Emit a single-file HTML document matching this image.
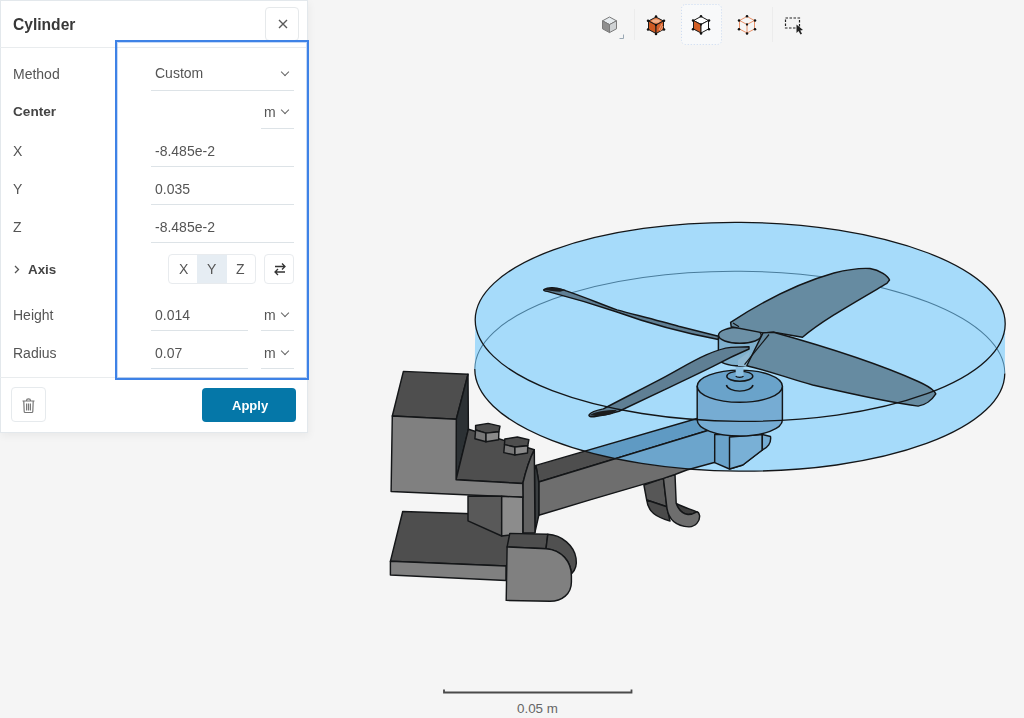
<!DOCTYPE html>
<html><head><meta charset="utf-8">
<style>
*{box-sizing:border-box;margin:0;padding:0}
html,body{width:1024px;height:718px;overflow:hidden;background:#f5f5f5;-webkit-font-smoothing:antialiased;font-family:"Liberation Sans",sans-serif}
#scene{position:absolute;left:0;top:0}
#panel{position:absolute;left:0;top:0;width:308px;height:433px;background:#fff;box-shadow:inset 0 0 0 1px #e3e8ec,1px 3px 8px rgba(0,0,0,0.05);will-change:transform}
.t{position:absolute;white-space:nowrap;color:#555;font-size:14px;line-height:16px}
.ul{position:absolute;height:1px;background:#dde3e7}
.chev{position:absolute;width:6px;height:6px;border-right:1.2px solid #666;border-bottom:1.2px solid #666;transform:rotate(45deg)}
</style></head><body>
<!--SC--><svg id="scene" width="1024" height="718" viewBox="0 0 1024 718"><defs>
<clipPath id="disk"><path transform="rotate(0.48 740 346)" d="M475,321.8 A265,99.5 0 0 1 1005,321.8 L1005,371.2 A265,100 0 0 1 475,371.2 Z"/></clipPath>
</defs>
<g stroke="#141618" stroke-width="1.45" stroke-linejoin="round">
<!-- hook -->
<path fill="#575757" d="M643.9,485 L663.4,478.4 L666.8,506.8 L646.7,500 Z"/>
<path fill="#4a4a4a" d="M646.7,500 C648,512 656,517 670,521 L666.8,506.8 Z"/>
<path fill="#3f3f3f" d="M676.2,503.5 C683,507 690,509 696.9,511.8 C693,514 690,514.6 688,514.5 C683,514 679,511 676.2,503.5 Z"/>
<path fill="#6e6e6e" d="M663.4,478 L666.8,506.8 C668,518 675,526 689,526.9 C696,526.5 700,521 699.6,515.7 C699,513 698,512 696.9,511.8 C693,514 690,514.6 688,514.5 C683,514 679,511 676.2,503.5 L675,474.5 Z"/>
<!-- arm -->
<path fill="#4e4e4e" d="M535.9,465.4 L716,413 L716,428 L538.8,482 Z"/>
<path fill="#6e6e6e" d="M538.8,482 L716,428 L716,462 L686.8,470 L675,474.5 L663.4,478.4 L590,499.9 L538.8,515.3 Z"/>
<path fill="#3a3e40" d="M535.9,465.4 L538.8,482 L538.8,515.3 L535,532 L534.5,470 Z"/>
<!-- upper block -->
<path fill="#4e4e4e" d="M403.4,371.4 L468,374.2 L456.3,419.2 L392.3,416 Z"/>
<path fill="#2c3134" d="M468,374.2 L468.4,429.2 L456.1,479.7 L456.3,419.2 Z"/>
<!-- middle top -->
<path fill="#4e4e4e" d="M468.4,429.2 L534.3,449.8 C530,458 526,470 522.8,483.5 L456.1,479.7 Z"/>
<path fill="#626262" d="M534.3,449.8 L535,533 L523,533 L522.8,483.5 C526,470 530,458 534.3,449.8 Z"/>
<!-- front L -->
<path fill="#808080" d="M392.3,416 L456.3,419.2 L456.1,479.7 L522.8,483.5 L523,497.3 L391.1,491.5 Z"/>
<!-- bolts -->
<path fill="#4e4e4e" d="M475.6,425.5 L488.1,423.4 L500,426.1 L498.9,431.7 L486,433.1 L475.6,430 Z"/>
<path fill="#777" d="M475.6,430 L486,433.1 L486,441.8 L474.9,438.7 Z"/>
<path fill="#8a8a8a" d="M486,433.1 L498.9,431.7 L498.6,439.7 L486,441.8 Z"/>
<path fill="#4e4e4e" d="M504.8,439 L517.4,437 L528.9,439.7 L527.8,445.7 L514.9,447 L504.5,444.6 Z"/>
<path fill="#777" d="M504.5,444.6 L514.9,447 L514.9,455 L503.8,452.6 Z"/>
<path fill="#8a8a8a" d="M514.9,447 L527.8,445.7 L527.5,453 L514.9,455 Z"/>
<!-- plate -->
<path fill="#4e4e4e" d="M402.7,511.5 L480,514 L525,540 L506,566 L390.4,561.3 Z"/>
<path fill="#808080" d="M390.4,561.3 L506,566 L506,580.5 L390.4,575 Z"/>
<!-- column -->
<path fill="#595959" d="M468,496 L501.7,496.3 L501.7,536 L468,520.8 Z"/>
<path fill="#8c8c8c" d="M501.7,496.3 L522.8,497.3 L522.8,533.4 L501.7,536 Z"/>
<!-- clamp -->
<path fill="#4e4e4e" d="M509.8,533.4 L547.8,534.3 L546,548.8 L507.1,547 Z"/>
<path fill="#505050" d="M547.8,534.3 C562,535 574,546 576,558 C577,564 575.5,570 571.4,574 C570,560 562,551 546,548.8 Z"/>
<path fill="#808080" d="M507.1,547 L546,548.8 C562,550 571.4,562 571.4,576 L571.4,582 C571.4,594 562,601.3 550,601.3 L506.2,600.4 Z"/>
</g>
<!-- disk fill -->
<path fill="#a6dbfa" transform="rotate(0.48 740 346)" d="M475,321.8 A265,99.5 0 0 1 1005,321.8 L1005,371.2 A265,100 0 0 1 475,371.2 Z"/>
<g clip-path="url(#disk)" stroke="#141618" stroke-width="1.45" stroke-linejoin="round">
<path fill="#5f9ac3" d="M535.9,465.4 L716,413 L716,428 L538.8,482 Z"/>
<path fill="#6ca5cc" d="M538.8,482 L716,428 L716,462 L686.8,470 L675,474.5 L663.4,478.4 L590,499.9 L538.8,515.3 Z"/>
</g>
<!-- bottom ellipse back edge -->
<path fill="none" stroke="#4a7d9c" stroke-width="1" transform="rotate(0.48 740 346)" d="M475,371.2 A265,100 0 0 1 1005,371.2"/>
<g stroke="#141618" stroke-width="1.45" stroke-linejoin="round">
<!-- motor mount -->
<path fill="#6aa3ca" d="M714.7,434.5 L762.3,434.5 L762.3,450 L742.8,465 L729.5,469 L714.7,462.7 Z"/>
<path fill="#79b0d6" d="M729.5,437 L762.3,434.5 L762.3,450 L742.8,465 L729.5,469 Z"/>
<path fill="#75acd3" d="M762.3,434.5 L770.5,436.5 C771.5,443 767.5,448 762.3,450 Z"/>
<!-- motor -->
<path fill="#76acd3" d="M697.2,386.2 L782.4,386.2 L782.4,420 A42.6,16 0 0 1 697.2,420 Z"/>
<ellipse cx="739.8" cy="386.2" rx="42.6" ry="16.1" fill="#6aa3ca"/>
<!-- shaft/ring -->
<ellipse cx="739.8" cy="376.2" rx="13" ry="5" fill="none"/>
<path fill="none" d="M726.4,385 A13.4,7 0 0 0 753,385"/>
<path fill="#8cc0e2" stroke="none" d="M735.7,365 L743.5,365 L743.5,376.5 L735.7,376.5 Z"/>
<path fill="none" stroke-width="1.2" d="M735.7,376 A4,1.8 0 0 0 743.5,376"/>
<!-- hub -->
<path fill="#7fb0cd" d="M718.4,335.3 L761.3,335.3 L761.3,358 A21.4,8 0 0 1 718.4,358 Z"/>
<path fill="#8fb8d2" stroke="none" d="M738,360 L750,351 L747,366 L738,366 Z"/>
<ellipse cx="739.9" cy="335.3" rx="21.4" ry="8" fill="#6c90a6"/>
<!-- blade C thin -->
<path fill="#5f7f94" d="M544.2,289.4 C548,287 556,287.5 561.7,289.4 C585,297 600,304 617,309.9 C640,316 660,321 678.6,326.3 L718.4,336.2 L718.4,339.5 C690,334 650,324 617,312 C590,303 565,296 547.3,291.4 C544,291 543,290 544.2,289.4 Z"/>
<path fill="#1a1c1e" stroke="none" d="M544.5,290 C546,287 556,286.8 566,290 L560,291.8 C555,291.2 549,291 544.5,290 Z"/>
<!-- blade A -->
<path fill="#668ba1" d="M730.6,322.3 C771,296 802,282 834,273 C850,269 862,268 870,268.5 C880,270 888,276 889.5,280 L886.9,283.4 C850,305 820,322 802.5,337.3 L773.5,332.3 L763,332.9 L731.2,326.7 Z"/>
<path fill="none" stroke-width="1.2" d="M733,323 L739,326.7"/>
<!-- blade B -->
<path fill="#668ba1" d="M763,332.9 L773.5,332.3 C830,348 883,365.7 918.2,381.5 C926,385 932,389 934,391.2 L935.8,393.8 C932,400 925,405 918.2,406.1 C900,404 865,397 812.7,385 C790,379 770,371 746.8,365.7 Z"/>
<path fill="none" stroke-width="1.2" d="M769,334.5 L744.5,364.6"/>
<!-- blade D -->
<path fill="#5f7f94" d="M589.4,414.4 C592,411 598,410 603.4,408.9 C620,400 640,390 656.4,381.4 C675,372 690,362 706.2,354.9 C715,351 725,348 731,347.4 L749,346.8 L749,349 C735,355 725,360 714.5,365.6 C700,373 680,382 664.7,389.7 C645,399 630,406 619,411.25 C610,414 600,416 594,416.7 C590,417 588,416 589.4,414.4 Z"/>
</g>
<path fill="#1a1c1e" d="M590,415 C595,411.5 605,410 617,410 L612,414 C605,416 596,417 590,415 Z"/>
<!-- disk outlines -->
<g fill="none" stroke="#141618" stroke-width="1.3" transform="rotate(0.48 740 346)">
<ellipse cx="740" cy="321.8" rx="265" ry="99.5"/>
<path d="M475,371.2 A265,100 0 0 0 1005,371.2"/>
</g>
</svg><!--/SC-->
<!--TB--><svg style="position:absolute;left:0;top:0" width="1024" height="718" viewBox="0 0 1024 718">
<!-- separators -->
<line x1="634.5" y1="9" x2="634.5" y2="40" stroke="#ececec" stroke-width="1"/>
<line x1="772.5" y1="7" x2="772.5" y2="42" stroke="#ececec" stroke-width="1"/>
<!-- selected button -->
<rect x="681.5" y="4.5" width="40" height="40" rx="4" fill="#f8f9fa" stroke="#c9d9f2" stroke-width="1" stroke-dasharray="1 2"/>
<!-- gray cube -->
<g stroke="#7a7a7a" stroke-width="1" stroke-linejoin="round">
<path d="M609.5,17 L616.5,20.8 L609.5,24.6 L602.5,20.8 Z" fill="#e6ebee"/>
<path d="M602.5,20.8 L609.5,24.6 L609.5,32.6 L602.5,28.8 Z" fill="#8f8f8f"/>
<path d="M616.5,20.8 L609.5,24.6 L609.5,32.6 L616.5,28.8 Z" fill="#cfd2d4"/>
</g>
<path d="M619.5,38.5 L623.5,38.5 L623.5,34.5" fill="none" stroke="#9aa8b4" stroke-width="1"/>
<!-- orange cube -->
<g stroke="#1a1a1a" stroke-width="1" stroke-linejoin="round">
<path d="M656,17 L663.5,21 L656,25 L648.5,21 Z" fill="#e07a47"/>
<path d="M648.5,21 L656,25 L656,33.5 L648.5,29.5 Z" fill="#cf5a22"/>
<path d="M663.5,21 L656,25 L656,33.5 L663.5,29.5 Z" fill="#d6602a"/>
</g>
<ellipse cx="656" cy="21" rx="4" ry="1.8" fill="#f2b08a"/>
<path d="M659,30 L662,24 M660.5,31 L663,26" stroke="#f0a47c" stroke-width="1"/>
<g fill="#111">
<circle cx="656" cy="16.5" r="1.25"/><circle cx="664" cy="20.8" r="1.25"/><circle cx="664" cy="29.6" r="1.25"/>
<circle cx="656" cy="34" r="1.25"/><circle cx="648" cy="29.6" r="1.25"/><circle cx="648" cy="20.8" r="1.25"/><circle cx="656" cy="25" r="1.15"/>
</g>
<!-- white cube with orange face -->
<g stroke="#1a1a1a" stroke-width="1" stroke-linejoin="round">
<path d="M701,16.5 L708.5,20.5 L701,24.5 L693.5,20.5 Z" fill="#fff"/>
<path d="M693.5,20.5 L701,24.5 L701,33 L693.5,29 Z" fill="#d35f27"/>
<path d="M708.5,20.5 L701,24.5 L701,33 L708.5,29 Z" fill="#fff"/>
</g>
<g fill="#111">
<circle cx="701" cy="16.3" r="1.25"/><circle cx="709" cy="20.5" r="1.25"/><circle cx="709" cy="29.2" r="1.25"/>
<circle cx="701" cy="33.5" r="1.25"/><circle cx="693" cy="29.2" r="1.25"/><circle cx="693" cy="20.5" r="1.25"/><circle cx="701" cy="24.5" r="1.15"/>
</g>
<!-- wire cube -->
<g stroke="#e8875a" stroke-width="0.9" fill="none">
<path d="M747,16.5 L754.5,20.5 L754.5,29 L747,33 L739.5,29 L739.5,20.5 Z"/>
<path d="M739.5,20.5 L747,24.5 L754.5,20.5 M747,24.5 L747,33"/>
</g>
<g fill="#111">
<circle cx="747" cy="16.3" r="1.25"/><circle cx="755" cy="20.5" r="1.25"/><circle cx="755" cy="29.2" r="1.25"/>
<circle cx="747" cy="33.5" r="1.25"/><circle cx="739" cy="29.2" r="1.25"/><circle cx="739" cy="20.5" r="1.25"/><circle cx="747" cy="24.5" r="1.15"/>
</g>
<!-- select icon -->
<rect x="785.5" y="18" width="14" height="10" fill="none" stroke="#222" stroke-width="1.2" stroke-dasharray="2.5 1.5"/>
<path d="M796.5,24.5 L796.5,33 L798.5,31 L800.5,34.5 L802,33.8 L800.2,30.5 L803,30 Z" fill="#222"/>
<!-- scale bar -->
<path d="M444,689.5 L444,692.5 L631.5,692.5 L631.5,689.5" fill="none" stroke="#4a4a4a" stroke-width="1.8"/>
</svg>
<div style="position:absolute;left:517px;top:701px;font-size:13.4px;color:#666;line-height:16px;white-space:nowrap">0.05 m</div>
<!--/TB-->
<div id="panel">
  <div class="t" style="left:13px;top:16px;font-size:15.6px;font-weight:bold;color:#383838;line-height:18px">Cylinder</div>
  <div style="position:absolute;left:265px;top:7px;width:34px;height:34px;border:1px solid #e6e9eb;border-radius:4px;background:#fff"></div>
  <svg style="position:absolute;left:277.5px;top:19px" width="10" height="10"><path d="M1 1L9 9M9 1L1 9" stroke="#5a5a5a" stroke-width="1.4"/></svg>
  <div style="position:absolute;left:0;top:47px;width:306px;height:1px;background:#e9ecee"></div>

  <div class="t" style="left:13px;top:66px">Method</div>
  <div class="t" style="left:155px;top:65px">Custom</div>
  <div class="chev" style="left:282px;top:69px"></div>
  <div class="ul" style="left:151px;top:90px;width:143px"></div>

  <div class="t" style="left:13px;top:104px;font-weight:bold;color:#444;font-size:13.6px">Center</div>
  <div class="t" style="left:264px;top:104px">m</div>
  <div class="chev" style="left:282px;top:107px"></div>
  <div class="ul" style="left:261px;top:128px;width:33px"></div>

  <div class="t" style="left:13px;top:143px">X</div>
  <div class="t" style="left:155px;top:143px">-8.485e-2</div>
  <div class="ul" style="left:151px;top:166px;width:143px"></div>

  <div class="t" style="left:13px;top:181px">Y</div>
  <div class="t" style="left:155px;top:181px">0.035</div>
  <div class="ul" style="left:151px;top:204px;width:143px"></div>

  <div class="t" style="left:13px;top:219px">Z</div>
  <div class="t" style="left:155px;top:219px">-8.485e-2</div>
  <div class="ul" style="left:151px;top:242px;width:143px"></div>

  <svg style="position:absolute;left:13.5px;top:265px" width="6" height="9"><path d="M1 1L4.5 4.5L1 8" stroke="#555" stroke-width="1.3" fill="none"/></svg>
  <div class="t" style="left:28px;top:261.5px;font-weight:bold;color:#444;font-size:13.4px">Axis</div>
  <div style="position:absolute;left:168px;top:254px;width:88px;height:30px;border:1px solid #e8ebee;border-radius:4px;background:#fff;overflow:hidden">
    <div style="position:absolute;left:28px;top:0;width:30px;height:28px;background:#e6edf3"></div>
  </div>
  <div class="t" style="left:179px;top:261px">X</div>
  <div class="t" style="left:207px;top:261px">Y</div>
  <div class="t" style="left:236px;top:261px">Z</div>
  <div style="position:absolute;left:264px;top:254px;width:30px;height:30px;border:1px solid #e8ebee;border-radius:4px;background:#fff"></div>
  <svg style="position:absolute;left:272.5px;top:262px" width="14" height="14"><path d="M2 4.5H12M9 1.5L12 4.5L9 7.5M12 10H2M5 7L2 10L5 13" stroke="#333" stroke-width="1.3" fill="none"/></svg>

  <div class="t" style="left:13px;top:307px">Height</div>
  <div class="t" style="left:155px;top:307px">0.014</div>
  <div class="ul" style="left:151px;top:330px;width:97px"></div>
  <div class="t" style="left:264px;top:307px">m</div>
  <div class="chev" style="left:282px;top:310px"></div>
  <div class="ul" style="left:261px;top:330px;width:33px"></div>

  <div class="t" style="left:13px;top:345px">Radius</div>
  <div class="t" style="left:155px;top:345px">0.07</div>
  <div class="ul" style="left:151px;top:368px;width:97px"></div>
  <div class="t" style="left:264px;top:345px">m</div>
  <div class="chev" style="left:282px;top:348px"></div>
  <div class="ul" style="left:261px;top:368px;width:33px"></div>

  <div style="position:absolute;left:0;top:377px;width:306px;height:1px;background:#e9ecee"></div>
  <div style="position:absolute;left:11px;top:387px;width:35px;height:35px;border:1px solid #e6eaed;border-radius:4px;background:#fff"></div>
  <svg style="position:absolute;left:22px;top:397px" width="13" height="17"><path d="M0.5,4H12.5M4.5,3.5C4.5,1.3 8.5,1.3 8.5,3.5M1.8,4.5L2.2,14.5C2.2,15.2 2.6,15.5 3.2,15.5H9.8C10.4,15.5 10.8,15.2 10.8,14.5L11.2,4.5M4.6,6.5V13.5M6.5,6.5V13.5M8.4,6.5V13.5" stroke="#777" stroke-width="1.2" fill="none"/></svg>
  <div style="position:absolute;left:202px;top:388px;width:94px;height:34px;border-radius:4px;background:#0577a8"></div>
  <div class="t" style="left:232px;top:397.5px;color:#fff;font-weight:bold;font-size:13px">Apply</div>
</div>
<div style="position:absolute;left:115px;top:40px;width:194px;height:340px;border:2px solid #3e82e6;box-shadow:inset 0 0 0 1px rgba(62,130,230,0.3)"></div>
</body></html>
